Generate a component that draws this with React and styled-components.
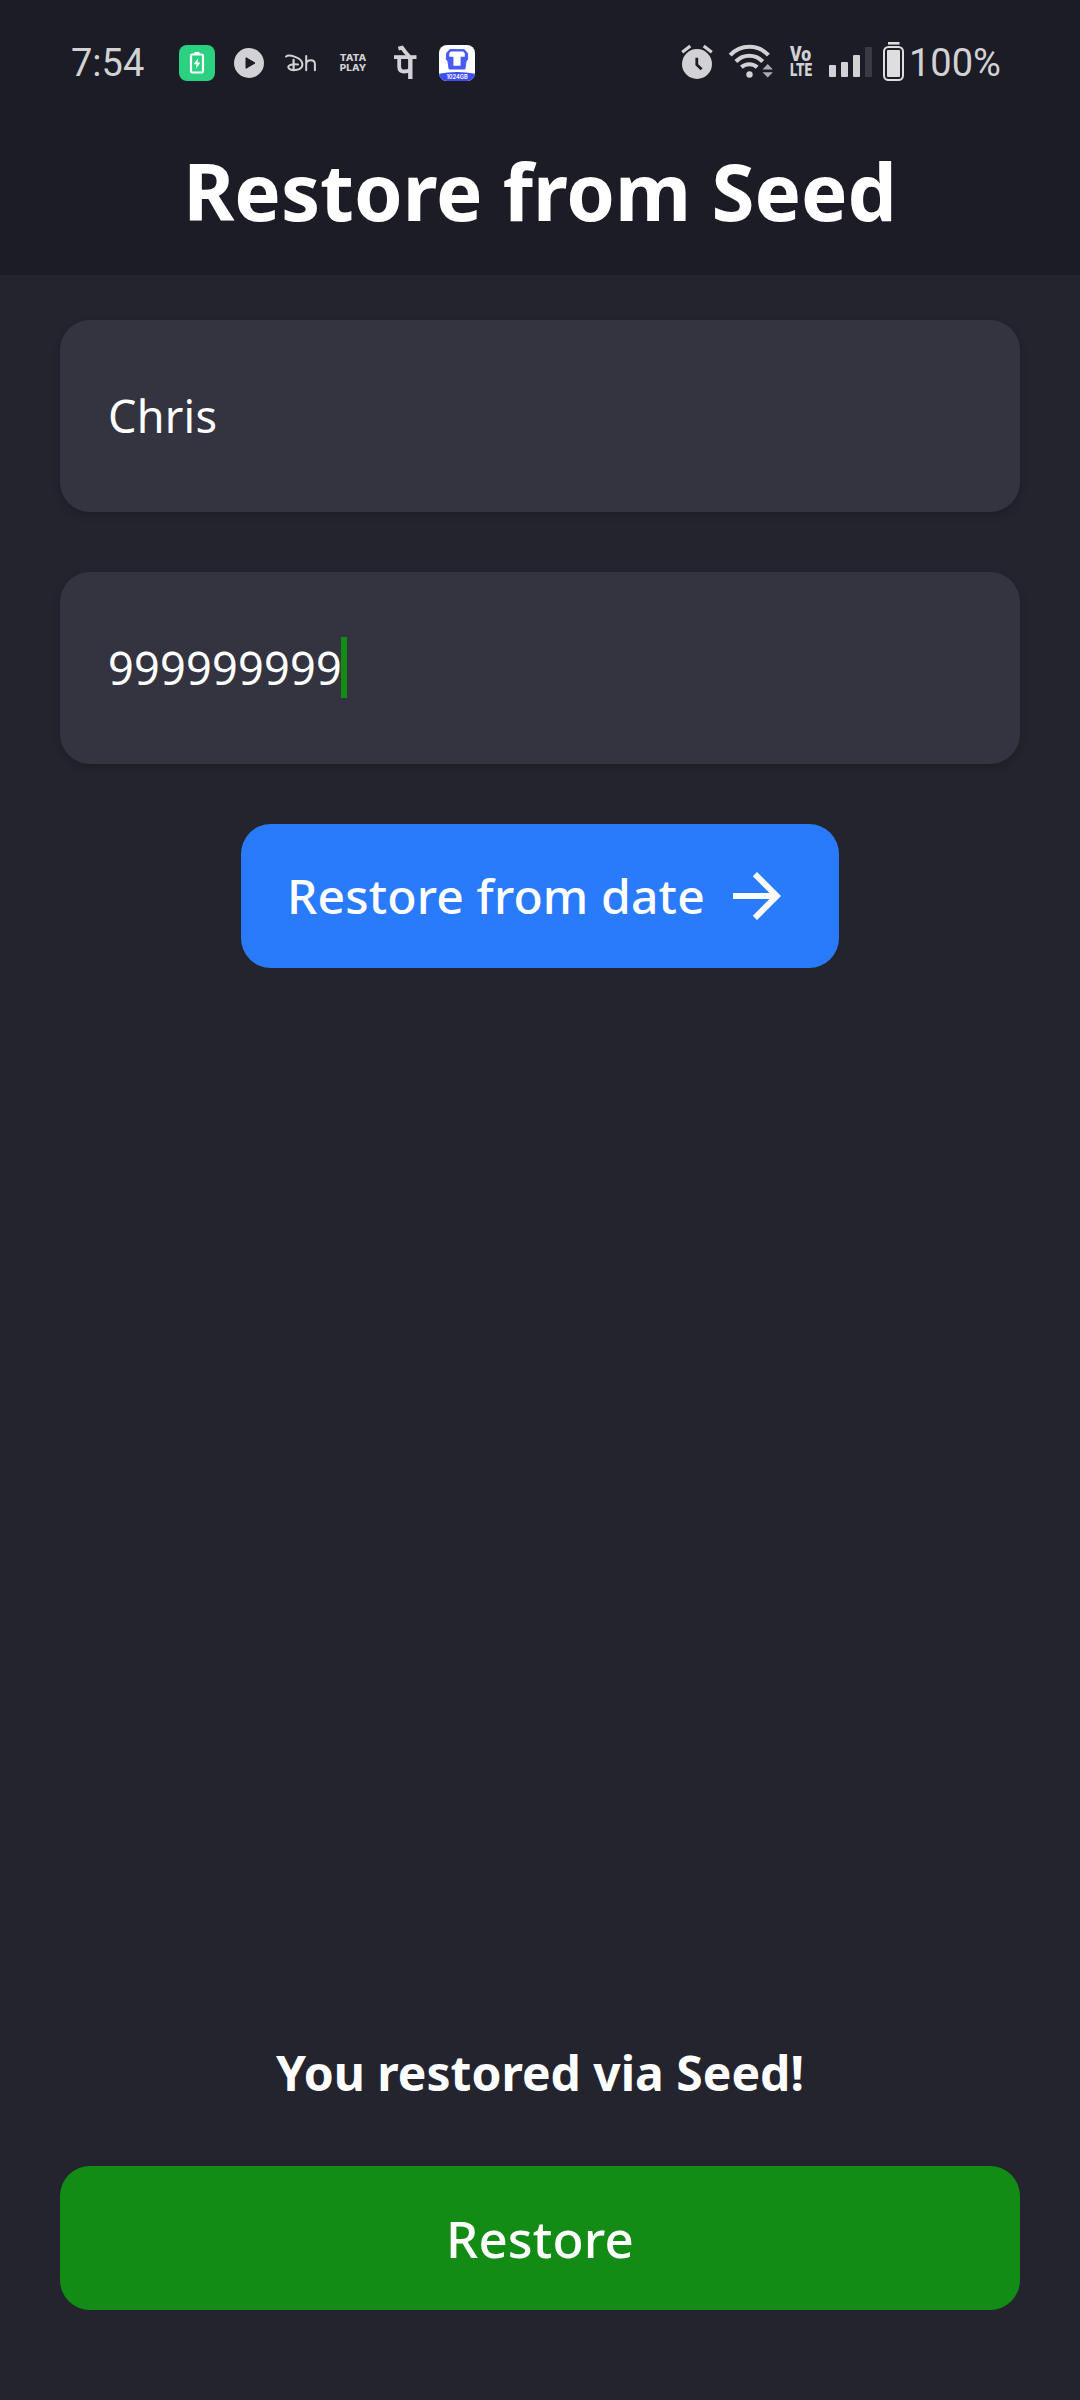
import React from "react";
import styled, { createGlobalStyle } from "styled-components";

const GlobalStyle = createGlobalStyle`
  *, *::before, *::after { box-sizing: border-box; }
  html, body { margin: 0; background: #24242e; }
  body { font-family: "Noto Sans", "Open Sans", sans-serif; color: #fff; }
`;

const Screen = styled.div`
  display: flex;
  flex-direction: column;
  width: 1080px;
  height: 2400px;
  background: #24242e;
`;

const Header = styled.header`
  flex: none;
  height: 275px;
  background: #1c1c26;
`;

const StatusBar = styled.div`
  display: flex;
  align-items: center;
  justify-content: space-between;
  height: 126px;
  padding: 0 78px 0 71px;
  color: #d2d2d4;
`;

const StatusGroup = styled.div`
  display: flex;
  align-items: center;
`;

const StatusText = styled.span`
  font: 420 38px/40px Roboto, Inter, sans-serif;
  width: ${(p) => p.$width}px;
  margin-left: ${(p) => p.$ml || 0}px;
  white-space: nowrap;
`;

const Notifications = styled.div`
  display: flex;
  gap: 16px;
  margin-left: 34px;
`;

const Glyph = styled.svg`
  display: block;
  flex: none;
  width: ${(p) => p.$w || 36}px;
  height: ${(p) => p.$h || 36}px;
  margin-left: ${(p) => p.$ml || 0}px;
  overflow: visible;
`;

const Title = styled.h1`
  margin: 12px 0 0;
  text-align: center;
  font-size: 78px;
  line-height: 106px;
  font-weight: 700;
`;

const Form = styled.main`
  display: flex;
  flex-direction: column;
  align-items: center;
  gap: 60px;
  padding: 45px 60px 0;
`;

const Field = styled.div`
  display: flex;
  align-items: center;
  width: 100%;
  height: 192px;
  padding: 0 48px 1px;
  border-radius: 30px;
  background: #343440;
  box-shadow: 0 3px 8px rgba(0, 0, 0, 0.2);
  font-size: 45px;
  font-weight: 430;
  line-height: 61px;
  letter-spacing: 0.26px;
`;

const Caret = styled.span`
  width: 6px;
  height: 61px;
  margin-left: -1px;
  background: #138c16;
`;

const Button = styled.button`
  display: flex;
  align-items: center;
  justify-content: center;
  gap: ${(p) => p.$gap || 0}px;
  width: ${(p) => p.$width || "100%"};
  height: 144px;
  padding: ${(p) => p.$nudge || 0}px 0 0;
  border: 0;
  border-radius: 30px;
  background: ${(p) => p.$color};
  color: #fff;
  font: 550 ${(p) => p.$size}px/1.36 "Noto Sans", "Open Sans", sans-serif;
  letter-spacing: 0.15px;
`;

const Footer = styled.footer`
  display: flex;
  flex-direction: column;
  align-items: center;
  margin-top: auto;
  padding: 0 60px 90px;
`;

const Message = styled.p`
  margin: 0 0 60px;
  font-size: 48px;
  line-height: 66px;
  font-weight: 700;
`;

const ChargeIcon = () => (
  <Glyph viewBox="0 0 36 36">
    <rect width="36" height="36" rx="8" fill="#2bd080" />
    <rect x="15.3" y="7" width="5.4" height="3" rx="1" fill="#fff" />
    <rect x="12" y="9.5" width="12" height="18" rx="1.3" fill="none" stroke="#fff" strokeWidth="2.2" />
    <path d="M19.2 13l-4.6 6.2h2.9l-.8 4.9 4.7-6.5h-2.9z" fill="#fff" />
  </Glyph>
);

const PlayIcon = () => (
  <Glyph viewBox="0 0 36 36">
    <circle cx="18" cy="18" r="15" fill="#d2d2d4" />
    <path d="M15 12.7v10.6L24 18z" fill="#1c1c26" stroke="#1c1c26" strokeWidth="1" strokeLinejoin="round" />
  </Glyph>
);

const HotstarIcon = () => (
  <Glyph viewBox="0 0 36 36" fill="none" stroke="#d2d2d4" strokeLinecap="round">
    <path d="M3 11.6C5.5 9.2 19.2 12.2 19.4 19.4C19.4 25.4 9 26.4 6 23.6C3.5 20.8 8 18.6 15 19.4" strokeWidth="2" />
    <path d="M10.6 14.8v9.6" strokeWidth="2.2" />
    <path d="M23.2 11v14.3M23.2 19c.6-5 8.7-5 8.7 0v6.3" strokeWidth="2" />
  </Glyph>
);

const TataPlayIcon = () => (
  <Glyph viewBox="0 0 36 36" fill="#d2d2d4" fontFamily="Inter, sans-serif" fontWeight="800" fontSize="9.6">
    <text x="4.8" y="16.2" textLength="26.4" lengthAdjust="spacingAndGlyphs">TATA</text>
    <text x="4.8" y="26.4" textLength="26.4" lengthAdjust="spacingAndGlyphs">PLAY</text>
  </Glyph>
);

const PhonePeIcon = () => (
  <Glyph viewBox="0 0 36 36" fill="none" stroke="#d2d2d4" strokeWidth="3.8">
    <path d="M7 12.1H29.5" />
    <path d="M12.2 12v9.5q0 5 5 5q3.5 0 6-1.6" />
    <path d="M23.3 12v22" strokeWidth="4.4" />
    <path d="M11.4 3.6L15 2.6Q17.8 6.8 22.5 11.8" strokeWidth="3.8" />
  </Glyph>
);

const TeraBoxIcon = () => (
  <Glyph viewBox="0 0 36 36">
    <clipPath id="tile"><rect width="36" height="36" rx="8" /></clipPath>
    <g clipPath="url(#tile)">
      <rect width="36" height="36" fill="#fff" />
      <path d="M0 28.8Q18 25 36 28.8V36H0z" fill="#3d4df2" />
    </g>
    <path d="M10.8 4.6h14.4l3.3 3.6.2 6-1.6 2-1.2 7.8H10.1l-1.2-7.8-1.6-2 .2-6z" fill="#4a5bf5" stroke="#4a5bf5" strokeWidth="1" strokeLinejoin="round" />
    <path d="M11.8 6.4h12.4l1.6 2v3.4h-4.2v9h-7.2v-9h-4.2V8.4z" fill="#fff" />
    <text x="7.4" y="34" fill="#fff" fontFamily="Inter, sans-serif" fontWeight="600" fontSize="6" textLength="21.4" lengthAdjust="spacingAndGlyphs">1024GB</text>
  </Glyph>
);

const AlarmIcon = () => (
  <Glyph viewBox="0 0 32 36" $w={32}>
    <circle cx="16" cy="19" r="15" fill="#d2d2d4" />
    <path d="M1.2 7.2L9.3 1M30.8 7.2L22.7 1" stroke="#d2d2d4" strokeWidth="3.2" />
    <path d="M15.8 12.7v7l4.8 4.5" fill="none" stroke="#1c1c26" strokeWidth="2.8" />
  </Glyph>
);

const WifiIcon = () => (
  <Glyph viewBox="0 0 44 36" $w={44} $ml={16}>
    <g fill="none" stroke="#d2d2d4" strokeWidth="4.1">
      <path d="M1.2 10.2Q9 1.8 20.3 1.8T39.4 10.2" />
      <path d="M6.9 16.5Q12.4 10.7 20.3 10.7T33.7 16.5" />
      <path d="M12.4 22.2Q15.7 19.2 20.3 19.2T28.2 22.2" />
    </g>
    <circle cx="20.5" cy="29.5" r="3.2" fill="#d2d2d4" />
    <path d="M33.5 24.4h10.4l-5.2-5.4zM33.5 27.2h10.4l-5.2 5.4z" fill="#aaaab0" />
  </Glyph>
);

const VolteIcon = () => (
  <Glyph viewBox="0 0 22 36" $w={22} $ml={17} fill="#d2d2d4" fontFamily="Roboto, sans-serif" fontWeight="900">
    <text transform="translate(0 15.8) scale(.9 1)" fontSize="19.5">Vo</text>
    <text transform="translate(0 31.4) scale(.7 1)" fontSize="19.2">LTE</text>
  </Glyph>
);

const SignalIcon = () => (
  <Glyph viewBox="0 0 43 36" $w={43} $ml={17} fill="#d2d2d4">
    <rect x="0" y="20" width="7" height="12" rx="1" />
    <rect x="12" y="17" width="7" height="15" rx="1" />
    <rect x="24" y="10" width="7" height="22" rx="1" />
    <rect x="36" y="2" width="7" height="30" rx="1" fill="#3a3a43" />
  </Glyph>
);

const BatteryIcon = () => (
  <Glyph viewBox="0 0 22 40" $w={22} $h={40} $ml={11}>
    <rect x="5" y="-1" width="11.5" height="2.6" fill="#dededf" />
    <rect x="1" y="4" width="19" height="33" rx="4.5" fill="none" stroke="#dededf" strokeWidth="2" />
    <rect x="4" y="7" width="13" height="27" rx="1" fill="#dededf" />
  </Glyph>
);

const ArrowIcon = () => (
  <Glyph viewBox="0 0 24 24" $w={72} $h={72} fill="#fff">
    <path d="M12 4l-1.41 1.41L16.17 11H4v2h12.17l-5.58 5.59L12 20l8-8z" />
  </Glyph>
);

export default function App() {
  return (
    <>
      <GlobalStyle />
      <Screen>
        <Header>
          <StatusBar>
            <StatusGroup>
              <StatusText $width={74}>7:54</StatusText>
              <Notifications>
                <ChargeIcon />
                <PlayIcon />
                <HotstarIcon />
                <TataPlayIcon />
                <PhonePeIcon />
                <TeraBoxIcon />
              </Notifications>
            </StatusGroup>
            <StatusGroup>
              <AlarmIcon />
              <WifiIcon />
              <VolteIcon />
              <SignalIcon />
              <BatteryIcon />
              <StatusText $width={93} $ml={4}>100%</StatusText>
            </StatusGroup>
          </StatusBar>
          <Title>Restore from Seed</Title>
        </Header>
        <Form>
          <Field>Chris</Field>
          <Field>
            999999999
            <Caret />
          </Field>
          <Button $color="#297bfc" $width="598px" $size={48} $gap={16}>
            Restore from date
            <ArrowIcon />
          </Button>
        </Form>
        <Footer>
          <Message>You restored via Seed!</Message>
          <Button $color="#138c16" $size={51} $nudge={2}>Restore</Button>
        </Footer>
      </Screen>
    </>
  );
}
